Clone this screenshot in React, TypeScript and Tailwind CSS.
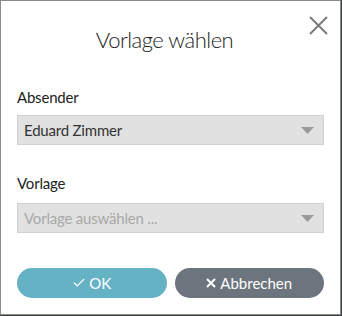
import { Check } from 'lucide-react';

function Caret() {
  return (
    <svg width="13" height="7" viewBox="0 0 13 7" className="shrink-0">
      <path d="M0 0h13L6.5 7z" fill="#9a9a9a" />
    </svg>
  );
}

function SelectBox({ value, placeholder }: { value?: string; placeholder?: string }) {
  return (
    <div className="flex h-[30px] items-center justify-between border border-[#d2d2d2] bg-[#e1e1e1] pl-[6px] pr-[9px]">
      <span className={value ? 'text-[15px] tracking-[-0.2px] text-[#333]' : 'text-[15px] tracking-[-0.2px] text-[#a8a8a8]'}>
        {value ?? placeholder}
      </span>
      <Caret />
    </div>
  );
}

export default function App() {
  return (
    <div className="h-[316px] w-[342px] bg-[#3a3f44]" style={{ fontFamily: 'Lato, "Open Sans", sans-serif' }}>
      <div className="relative flex h-[315px] w-[341px] flex-col border border-[#8a8a8a] bg-white px-4">
        <button className="absolute left-[308px] top-[15px]">
          <svg width="19" height="19" viewBox="0 0 19 19">
            <path d="M1 1l17 17M18 1L1 18" stroke="#7b7b7b" strokeWidth="2" fill="none" />
          </svg>
        </button>

        <h1 className="mr-[12px] mt-[24px] text-center text-[22px] font-light leading-[30px] tracking-[-0.5px] text-[#222]">
          Vorlage wählen
        </h1>

        <label className="mt-[32px] text-[15px] leading-[20px] tracking-[-0.2px] text-[#222]">Absender</label>
        <div className="mt-[8px]">
          <SelectBox value="Eduard Zimmer" />
        </div>

        <label className="mt-[28px] text-[15px] leading-[20px] tracking-[-0.2px] text-[#222]">Vorlage</label>
        <div className="mt-[10px]">
          <SelectBox placeholder="Vorlage auswählen ..." />
        </div>

        <div className="mt-[35px] flex gap-[8px]">
          <button className="flex h-[30px] flex-1 items-center justify-center gap-[3px] rounded-full bg-[#66b2c5] text-[15px] text-white">
            <Check className="h-[14px] w-[14px]" strokeWidth={2.2} />
            OK
          </button>
          <button className="flex h-[30px] flex-1 items-center justify-center gap-[4px] rounded-full bg-[#6c747d] text-[15px] text-white">
            <svg width="10" height="10" viewBox="0 0 10 10">
              <path d="M1 1l8 8M9 1L1 9" stroke="white" strokeWidth="2" fill="none" />
            </svg>
            Abbrechen
          </button>
        </div>
      </div>
    </div>
  );
}
